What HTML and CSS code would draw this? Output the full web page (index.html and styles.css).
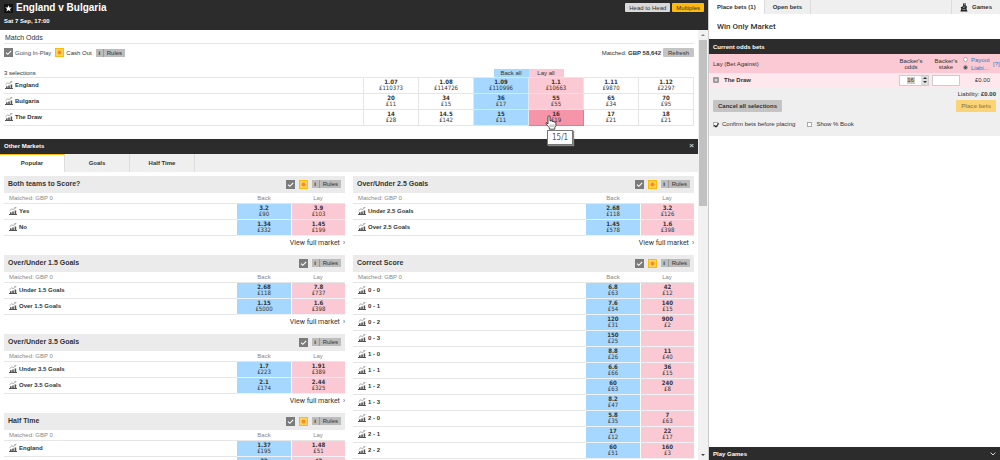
FILE: index.html
```
<!doctype html>
<html lang="en">
  <head>
    <meta charset="utf-8">
    <meta name="viewport" content="width=device-width, initial-scale=1">
    <title>England v Bulgaria</title>
    <link rel="stylesheet" href="styles.css">
  </head>
  <body>
	<svg class="sprite" aria-hidden="true">
		<symbol id="i-chart" viewBox="0 0 8 8">
			<path d="M0.5 3.8 L2.8 1.8 L4.2 2.6 L6.8 0.8 M5.4 0.6 H7.4" fill="none" stroke="#888" stroke-width="0.7"/>
			<path d="M0 7 H8 V8 H0 Z M1 5.2 H2.6 V7.5 H1 Z M3.2 4.6 H4.8 V7.5 H3.2 Z M5.6 3.4 H7.2 V7.5 H5.6 Z" fill="#555"/>
		</symbol>
		<symbol id="i-tick" viewBox="0 0 9 9">
			<rect width="9" height="9" fill="#7b7b7b"/>
			<path d="M2 4.6 L3.8 6.3 L7.2 2.8" fill="none" stroke="#fff" stroke-width="1.1"/>
		</symbol>
		<symbol id="i-cash" viewBox="0 0 9 9">
			<rect width="9" height="9" fill="#ffb80c"/>
			<rect x="1" y="1" width="7" height="7" fill="#ffd35c"/>
			<circle cx="4.5" cy="4.5" r="2" fill="#ff8a1c"/>
		</symbol>
	</svg>

	<div class="app">
		<main class="event">
			<header class="event-head">
				<div>
					<h1>
						<svg class="star" viewBox="0 0 9 9"><rect width="9" height="9" fill="#111"/><path d="M4.5 1.2 L5.4 3.5 L7.9 3.6 L5.9 5.1 L6.6 7.5 L4.5 6.1 L2.4 7.5 L3.1 5.1 L1.1 3.6 L3.6 3.5 Z" fill="#fff"/></svg>
						England v Bulgaria
					</h1>
					<p>Sat 7 Sep, 17:00</p>
				</div>
				<div class="event-buttons">
					<button class="btn btn-light">Head to Head</button>
					<button class="btn btn-yellow">Multiples</button>
				</div>
			</header>

			<div class="scroller">
				<div class="content">
					<section class="match">
						<h2>Match Odds</h2>
						<div class="match-bar">
							<svg class="icon"><use href="#i-tick"/></svg><a href="#inplay">Going In-Play</a>
							<svg class="icon cash"><use href="#i-cash"/></svg><span>Cash Out</span>
							<button class="rules"><b>i</b><span>Rules</span></button>
							<span class="total">Matched: <b>GBP 58,642</b></span>
							<button class="btn btn-grey">Refresh</button>
						</div>
						<table class="odds">
							<thead>
								<tr><th class="name">3 selections</th><th></th><th></th><th><span class="tab-back">Back all</span></th><th><span class="tab-lay">Lay all</span></th><th></th><th></th></tr>
							</thead>
							<tbody>
								<tr><th class="name"><svg class="chart"><use href="#i-chart"/></svg>England</th><td><b>1.07</b>£110373</td><td><b>1.08</b>£114726</td><td class="back"><b>1.09</b>£110996</td><td class="lay"><b>1.1</b>£10663</td><td><b>1.11</b>£9870</td><td><b>1.12</b>£2297</td></tr>
								<tr><th class="name"><svg class="chart"><use href="#i-chart"/></svg>Bulgaria</th><td><b>20</b>£11</td><td><b>34</b>£15</td><td class="back"><b>36</b>£17</td><td class="lay"><b>55</b>£55</td><td><b>65</b>£34</td><td><b>70</b>£95</td></tr>
								<tr><th class="name"><svg class="chart"><use href="#i-chart"/></svg>The Draw</th><td><b>14</b>£28</td><td><b>14.5</b>£142</td><td class="back"><b>15</b>£11</td><td class="lay picked"><b>16</b>£19
									<svg class="cursor" viewBox="0 0 12 15"><path d="M3 9 V2 Q3 0.8 4 0.8 Q5 0.8 5 2 V6 L6 5.6 Q7 5.6 7 6.4 Q8.8 5.8 8.9 7 Q10.9 6.6 10.9 8 V10.6 L9.8 12.6 V14.2 H4.4 V12.8 L1 8.8 Q0.8 7.4 2 7.8 Z" fill="#fff" stroke="#222" stroke-width="0.8"/><path d="M5.2 9.4 V12 M7 9.4 V12 M8.8 9.4 V12" stroke="#555" stroke-width="0.5"/></svg>
									<span class="tip">15/1</span></td><td><b>17</b>£21</td><td><b>18</b>£21</td></tr>
							</tbody>
						</table>
					</section>

					<div class="bar">Other Markets <button class="close" aria-label="Close">×</button></div>
					<nav class="tabs">
						<a class="active" href="#popular">Popular</a>
						<a href="#goals">Goals</a>
						<a href="#halftime">Half Time</a>
					</nav>
					<div class="markets">
						<div class="col" id="left"></div>
						<div class="col" id="right"></div>
					</div>
				</div>
				<div class="scrollbar"><i class="up"></i><i class="thumb"></i><i class="down"></i></div>
			</div>
		</main>

		<aside class="slip">
			<nav class="slip-tabs">
				<a class="active" href="#place">Place bets (1)</a>
				<a href="#open">Open bets</a>
				<a class="games" href="#games"><svg viewBox="0 0 8 9"><path d="M3 0.5 H6 L5.6 2.4 L7 3.6 L6.4 6 L7.6 8.6 H0.4 L1.4 5.6 L0.6 4.6 L3.2 3 Z" fill="#222"/><path d="M3 4.4 L5.4 3.8 M2.4 6.4 H5.4 M4 1.6 H5.4" stroke="#eee" stroke-width="0.6"/></svg>Games</a>
			</nav>
			<h2>Win Only Market</h2>
			<div class="bar">Current odds bets</div>
			<form class="bets">
				<div class="bet-row bet-head">
					<span class="bet-name">Lay (Bet Against)</span>
					<label class="odds-label" for="odds">Backer's odds</label>
					<label for="stake">Backer's stake</label>
					<span class="mode">
						<label><input type="radio" name="mode">Payout</label>
						<label><input type="radio" name="mode" checked>Liabi...</label>
					</span>
					<a class="help" href="#help">[?]</a>
				</div>
				<div class="bet-row bet-line">
					<span class="bet-name"><button type="button" class="remove" aria-label="Remove">×</button><b>The Draw</b></span>
					<span class="stepper"><input type="text" id="odds" value="16"><span class="steps"><i class="inc"></i><i class="dec"></i></span></span>
					<span class="stake"><input type="text" id="stake"></span>
					<span class="amount">£0.00</span>
				</div>
				<div class="bet-foot">
					<p class="liability">Liability: <b>£0.00</b></p>
					<div class="actions">
						<button type="button" class="btn cancel">Cancel all selections</button>
						<button type="button" class="btn place" disabled>Place bets</button>
					</div>
					<div class="options">
						<label><input type="checkbox" checked>Confirm bets before placing</label>
						<label><input type="checkbox">Show % Book</label>
					</div>
				</div>
			</form>
			<div class="bar play">Play Games <svg viewBox="0 0 6 4"><path d="M0.6 0.6 L3 3 L5.4 0.6" fill="none" stroke="#ddd" stroke-width="1"/></svg></div>
		</aside>
	</div>
	<script src="markets.js"></script>
  </body>
</html>
```
FILE: styles.css
```
* { box-sizing: border-box; }

body
{
	margin: 0;
	font: 6px/8px "Liberation Sans", Arial, sans-serif;
	color: #333;
	background: #fff;
}

h1, h2, h3, p { margin: 0; }
a { color: inherit; text-decoration: none; }
svg { display: block; flex: none; }
button, input { font: inherit; color: inherit; margin: 0; padding: 0; border: 0; }
.sprite { display: none; }

.app
{
	display: flex;
	height: 100vh;
	overflow: hidden;
}

.event
{
	flex: 1;
	min-width: 0;
	display: flex;
	flex-direction: column;
}

.event-head
{
	display: flex;
	justify-content: space-between;
	height: 30px;
	padding: 2px 4px 0;
	color: #fff;
	background: #2c2c2c;
}

.event-head h1
{
	display: flex;
	align-items: center;
	gap: 3px;
	font-size: 10px;
	line-height: 12px;
}

.event-head p { margin-top: 3px; font-weight: bold; }
.star { width: 9px; height: 9px; }
.event-buttons { display: flex; gap: 2px; padding-top: 1px; }

.btn
{
	height: 9px;
	padding: 0 4px;
	color: #333;
	background: #c4c4c4;
	border-radius: 1px;
}

.btn-light { background: #d9d9d9; }
.btn-yellow { background: #ffb80c; }

.scroller
{
	flex: 1;
	min-height: 0;
	display: flex;
}

.content
{
	flex: 1;
	min-width: 0;
	overflow: hidden;
}

.scrollbar
{
	width: 10px;
	display: flex;
	flex-direction: column;
	align-items: center;
	background: #f1f1f1;
}

.thumb { width: 8px; height: 166px; background: #c1c1c1; }
.up, .down, .inc, .dec { border: 2px solid transparent; }
.up { margin: 2px 0 4px; border-bottom-color: #888; }
.down { margin: auto 0 2px; border-top-color: #444; }

.match { padding: 3px 4px 13px; }

.match h2
{
	padding: 1px 1px;
	font-size: 7px;
	font-weight: normal;
	border-bottom: 1px solid #e6e6e6;
}

.match-bar
{
	display: flex;
	align-items: center;
	gap: 2px;
	padding-top: 4px;
}

.match-bar a { color: #3a5266; }
.icon { width: 9px; height: 9px; }
.cash { margin-left: 2px; }

.rules
{
	display: flex;
	height: 8px;
	color: #333;
	background: #bcbcbc;
}

.rules b { width: 8px; border-right: 1px solid #999; }
.rules span { padding: 0 3px; }
.match-bar .rules { margin-left: 2px; }
.total { margin-left: auto; }
.btn-grey { padding: 0 5px; }

table
{
	width: 100%;
	border-spacing: 0;
	table-layout: fixed;
}

th, td { padding: 0; font-weight: normal; }

td
{
	position: relative;
	height: 16px;
	font: 6px/6px "DejaVu Sans Condensed", "DejaVu Sans", sans-serif;
	text-align: center;
	border-bottom: 1px solid #e6e6e6;
}

td b { display: block; }
th.name { text-align: left; }
tbody th { border-bottom: 1px solid #e6e6e6; font-weight: bold; }
.chart { display: inline-block; width: 8px; height: 8px; margin: 0 2px 0 1px; vertical-align: -2px; }

.odds { margin-top: 11px; border-collapse: collapse; }
.odds thead th { height: 9px; width: 55px; border-bottom: 1px solid #e6e6e6; vertical-align: bottom; }
.odds thead .name { width: auto; }
.odds td { border: 1px solid #e6e6e6; }
.tab-back, .tab-lay { display: block; width: 35px; }
.tab-back { margin-left: auto; }
.tab-back, .back { background: #a6d8ff; }
.tab-lay, .lay { background: #fac9d4; }
.odds .picked { background: #f694aa; border-color: #d9808f; }

.cursor
{
	position: absolute;
	left: 16px;
	top: 5px;
	width: 12px;
	height: 15px;
	z-index: 2;
}

.tip
{
	position: absolute;
	left: 18px;
	top: 20px;
	padding: 0 4px;
	font-size: 8px;
	line-height: 13px;
	color: #555;
	background: #fff;
	border: 1px solid #777;
	box-shadow: 1px 1px 1px #888;
	z-index: 1;
}

.bar
{
	display: flex;
	justify-content: space-between;
	align-items: center;
	height: 15px;
	padding: 0 4px;
	font-weight: bold;
	color: #fff;
	background: #2c2c2c;
}

.close { background: none; color: #ccc; font-size: 8px; }

.tabs { display: flex; background: #efefef; }

.tabs a
{
	width: 65px;
	padding: 5px 0;
	text-align: center;
	font-weight: bold;
	border-right: 1px solid #ddd;
}

.tabs .active { padding-top: 4px; background: #fff; border-top: 1px solid #ffb80c; }

.markets
{
	display: grid;
	grid-template-columns: 1fr 1fr;
	gap: 8px;
	padding: 4px 4px 0;
}

.market h3
{
	display: flex;
	align-items: center;
	gap: 4px;
	height: 17px;
	padding: 0 4px;
	font-size: 7px;
	background: #ebebeb;
}

.market h3 > span { flex: 1; }
.market .rules { font-size: 6px; font-weight: normal; }
.market thead th { height: 11px; width: 54px; color: #888; border-bottom: 1px solid #e6e6e6; }
.market thead .name { width: auto; padding-left: 5px; }
.market tbody .name { padding-left: 4px; }
.market td { border-bottom-color: #eef2f6; }
.market .lay { border-left: 1px solid #fff; }

.more
{
	display: flex;
	justify-content: flex-end;
	gap: 3px;
	height: 19px;
	padding-top: 3px;
	font-family: Roboto, sans-serif;
	font-size: 7px;
}

.slip
{
	width: 292px;
	display: flex;
	flex-direction: column;
	border-left: 1px solid #ccc;
}

.slip-tabs { display: flex; height: 14px; background: #efefef; }

.slip-tabs a
{
	display: flex;
	align-items: center;
	gap: 4px;
	padding: 0 8px;
	font-weight: bold;
	border-right: 1px solid #ddd;
}

.slip-tabs .active { background: #fff; }
.slip-tabs .games { margin-left: auto; border-left: 1px solid #ddd; border-right: 0; }
.slip-tabs svg { width: 8px; height: 9px; }

.slip h2
{
	padding: 8px 8px 7px;
	font-family: Roboto, sans-serif;
	font-size: 8px;
	line-height: 10px;
	font-weight: 500;
}

.bet-row
{
	display: grid;
	grid-template-columns: 1fr 30px 28px 27px 7px;
	column-gap: 3px;
	align-items: center;
	padding-left: 4px;
}

.bet-head { height: 19px; line-height: 6px; background: #fac9d4; }
.bet-head > label { text-align: center; }
.bet-head .odds-label { padding-right: 6px; }
.mode { color: #2a7ac8; }
.mode label { display: flex; align-items: center; gap: 3px; line-height: 8px; }
.help { color: #2a7ac8; }

input[type="radio"], input[type="checkbox"]
{
	appearance: none;
	flex: none;
	width: 5px;
	height: 5px;
	border: 1px solid #aaa;
	background: #fff;
}

input[type="radio"] { border-radius: 50%; }
input[type="radio"]:checked { background: #555; }

input[type="checkbox"]:checked::after
{
	content: "";
	display: block;
	width: 2px;
	height: 4px;
	border: solid #222;
	border-width: 0 1px 1px 0;
	transform: rotate(40deg);
	margin: -1px 0 0 1px;
}

.bet-line { height: 14px; background: #ffe8ed; }
.bet-name { display: flex; align-items: center; gap: 5px; }
.remove { width: 6px; height: 6px; line-height: 5px; color: #fff; background: #999; border-radius: 1px; }
.stepper { display: flex; height: 11px; border: 1px solid #ccc; background: #fff; }
.stepper input { width: 8px; margin: 1px auto; text-align: center; background: #ccc; }

.steps
{
	width: 7px;
	display: flex;
	flex-direction: column;
	align-items: center;
	justify-content: space-around;
	background: #ddd;
}

.inc { border-top: 0; border-bottom-color: #333; }
.dec { border-bottom: 0; border-top-color: #333; }
.stake input { display: block; width: 100%; height: 11px; border: 1px solid #ccc; }
.amount { text-align: right; }

.bet-foot { padding: 3px 4px 8px; background: #efefef; }
.liability { text-align: right; }
.actions { display: flex; justify-content: space-between; margin-top: 2px; }
.actions .btn { height: 12px; padding: 0 5px; font-weight: bold; }
.actions .place { color: #a58a4d; background: #fbd477; }
.options { display: flex; gap: 12px; margin-top: 8px; }
.options label { display: flex; align-items: center; gap: 4px; }
.play { height: 13px; margin-top: auto; }
.play svg { width: 6px; height: 4px; }
```
FILE: markets.js
```
var left =
[
	{ name: 'Both teams to Score?', cash: true, rows: [['Yes', '3.2', '£90', '3.9', '£103'], ['No', '1.34', '£332', '1.45', '£199']] },
	{ name: 'Over/Under 1.5 Goals', rows: [['Under 1.5 Goals', '2.68', '£118', '7.8', '£737'], ['Over 1.5 Goals', '1.15', '£5000', '1.6', '£398']] },
	{ name: 'Over/Under 3.5 Goals', rows: [['Under 3.5 Goals', '1.7', '£223', '1.91', '£389'], ['Over 3.5 Goals', '2.1', '£174', '2.44', '£325']] },
	{ name: 'Half Time', cash: true, rows: [['England', '1.37', '£195', '1.48', '£51'], ['Bulgaria', '32', '£15', '42', '£12']] }
];

var right =
[
	{ name: 'Over/Under 2.5 Goals', cash: true, rows: [['Under 2.5 Goals', '2.68', '£118', '3.2', '£126'], ['Over 2.5 Goals', '1.45', '£578', '1.6', '£398']] },
	{ name: 'Correct Score', cash: true, rows: [
		['0 - 0', '6.8', '£63', '42', '£12'],
		['0 - 1', '7.6', '£54', '140', '£15'],
		['0 - 2', '120', '£31', '900', '£2'],
		['0 - 3', '150', '£25', '', ''],
		['1 - 0', '8.8', '£26', '11', '£40'],
		['1 - 1', '6.6', '£66', '36', '£15'],
		['1 - 2', '60', '£63', '240', '£8'],
		['1 - 3', '8.2', '£47', '', ''],
		['2 - 0', '5.8', '£35', '7', '£63'],
		['2 - 1', '17', '£12', '22', '£17'],
		['2 - 2', '60', '£51', '160', '£3']
	] }
];

function icon(cls, id)
{
	return '<svg class="' + cls + '"><use href="#' + id + '"/></svg>';
}

function market(m)
{
	var rows = m.rows.map(function(r)
	{
		return '<tr><th class="name">' + icon('chart', 'i-chart') + r[0] + '</th>' +
			'<td class="back"><b>' + r[1] + '</b>' + r[2] + '</td>' +
			'<td class="lay"><b>' + r[3] + '</b>' + r[4] + '</td></tr>';
	}).join('');

	return '<section class="market"><h3><span>' + m.name + '</span>' +
		icon('icon', 'i-tick') + (m.cash ? icon('icon', 'i-cash') : '') +
		'<button class="rules"><b>i</b><span>Rules</span></button></h3>' +
		'<table><thead><tr><th class="name">Matched: GBP 0</th><th>Back</th><th>Lay</th></tr></thead>' +
		'<tbody>' + rows + '</tbody></table>' +
		'<a class="more" href="#market">View full market <span>&rsaquo;</span></a></section>';
}

document.getElementById('left').innerHTML = left.map(market).join('');
document.getElementById('right').innerHTML = right.map(market).join('');
```
